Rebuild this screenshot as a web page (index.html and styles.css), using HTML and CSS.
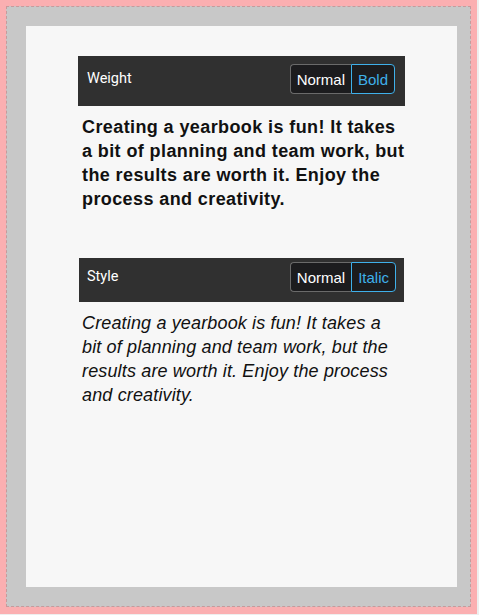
FILE: index.html
```html
<!DOCTYPE html>
<html>
<head>
<meta charset="utf-8">
<link rel="stylesheet" href="styles.css">
</head>
<body>
<div class="frame">
  <div class="panel">
    <section class="demo">
      <div class="bar">
        <span class="label">Weight</span>
        <div class="seg">
          <button class="opt">Normal</button>
          <button class="opt active">Bold</button>
        </div>
      </div>
      <p class="text bold">Creating a yearbook is fun! It takes a bit of planning and team work, but the results are worth it. Enjoy the process and creativity.</p>
    </section>
    <section class="demo second">
      <div class="bar">
        <span class="label">Style</span>
        <div class="seg">
          <button class="opt">Normal</button>
          <button class="opt active">Italic</button>
        </div>
      </div>
      <p class="text italic">Creating a yearbook is fun! It takes a bit of planning and team work, but the results are worth it. Enjoy the process and creativity.</p>
    </section>
  </div>
</div>
</body>
</html>
```
FILE: styles.css
```css
html {
  background: #eeeeee;
}
body {
  margin: 0;
  width: 477px;
  height: 614px;
  background: #fbafb1;
  padding: 6px;
  box-sizing: border-box;
  font-family: Roboto, "Liberation Sans", sans-serif;
}
.frame {
  width: 465px;
  height: 601px;
  box-sizing: border-box;
  border: 1px dashed #c69a9c;
  background: #c8c8c8;
  padding: 19px;
}
.panel {
  background: #f7f7f7;
  width: 431px;
  height: 561px;
  box-sizing: border-box;
  padding: 30px 52px 0 52px;
}
.demo.second {
  margin-top: 47px;
  padding: 0 1px;
}
.bar {
  height: 50px;
  box-sizing: border-box;
  background: #303030;
  display: flex;
  align-items: flex-start;
  justify-content: space-between;
  padding: 8px 10px 0 9px;
}
.second .bar {
  height: 44px;
  padding: 4px 8px 0 8px;
}
.label {
  color: #ffffff;
  font-size: 14.5px;
  font-weight: 400;
  line-height: 29px;
}
.seg {
  display: flex;
  height: 30px;
}
.opt {
  font-family: "Liberation Sans", Arial, sans-serif;
  font-size: 15px;
  background: #1c1c1e;
  color: #ffffff;
  border: 1px solid #6a6a6a;
  padding: 0 6px;
  margin: 0;
  height: 30px;
}
.opt:first-child {
  border-radius: 4px 0 0 4px;
  border-right: none;
  padding: 0 6px 0 6px;
}
.opt.active {
  color: #3fb0ea;
  border-color: #3fb0ea;
  border-radius: 0 4px 4px 0;
}
.text {
  margin: 9px -5px 0 4px;
  font-family: "Liberation Sans", Arial, sans-serif;
  font-size: 18px;
  line-height: 24px;
  color: #111111;
}
.bold {
  font-weight: 700;
  letter-spacing: 0.4px;
}
.italic {
  font-style: italic;
  margin-right: -1px;
  margin-left: 3px;
  letter-spacing: 0.15px;
}
```
